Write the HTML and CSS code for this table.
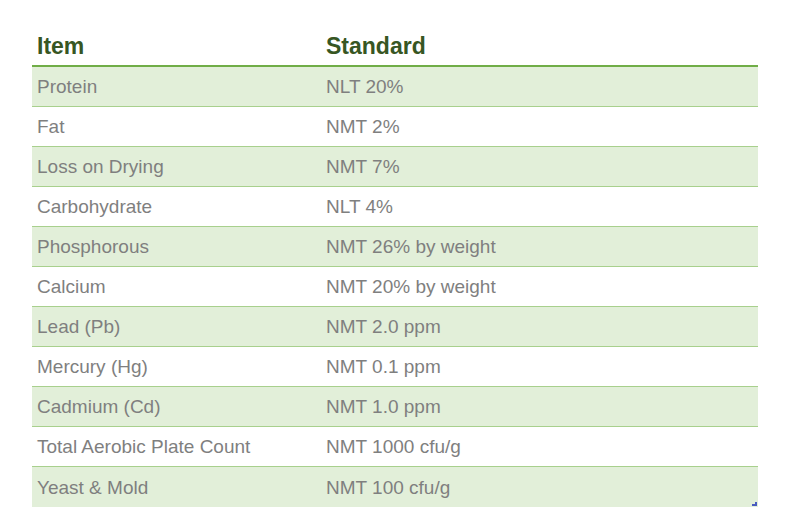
FILE: index.html
```html
<!DOCTYPE html>
<html>
<head>
<meta charset="utf-8">
<link rel="stylesheet" href="styles.css">
</head>
<body>
<div class="wrap">
<table class="spec">
  <thead>
    <tr><th class="c1">Item</th><th>Standard</th></tr>
  </thead>
  <tbody>
    <tr class="alt"><td>Protein</td><td>NLT 20%</td></tr>
    <tr><td>Fat</td><td>NMT 2%</td></tr>
    <tr class="alt"><td>Loss on Drying</td><td>NMT 7%</td></tr>
    <tr><td>Carbohydrate</td><td>NLT 4%</td></tr>
    <tr class="alt"><td>Phosphorous</td><td>NMT 26% by weight</td></tr>
    <tr><td>Calcium</td><td>NMT 20% by weight</td></tr>
    <tr class="alt"><td>Lead (Pb)</td><td>NMT 2.0 ppm</td></tr>
    <tr><td>Mercury (Hg)</td><td>NMT 0.1 ppm</td></tr>
    <tr class="alt"><td>Cadmium (Cd)</td><td>NMT 1.0 ppm</td></tr>
    <tr><td>Total Aerobic Plate Count</td><td>NMT 1000 cfu/g</td></tr>
    <tr class="alt last"><td>Yeast &amp; Mold</td><td class="endcell">NMT 100 cfu/g<span class="handle"></span></td></tr>
  </tbody>
</table>
</div>
</body>
</html>
```
FILE: styles.css
```css
html, body {
  margin: 0;
  padding: 0;
  background: #ffffff;
}
body {
  font-family: "Liberation Sans", Arial, sans-serif;
}
.wrap {
  padding: 32px 44px 0 32px;
}
.spec {
  width: 726px;
  border-collapse: collapse;
  table-layout: fixed;
}
.spec th {
  text-align: left;
  font-size: 23px;
  font-weight: bold;
  color: #375623;
  height: 33px;
  padding: 0 0 0 5px;
  vertical-align: top;
  line-height: 28px;
  border-bottom: 2px solid #70ad47;
}
.spec th.c1 {
  width: 284px;
}
.spec td {
  font-size: 19px;
  color: #7f7f7f;
  height: 38px;
  padding: 1px 0 0 5px;
  line-height: 38px;
  border-bottom: 1px solid #a8d08d;
}
.spec tr.alt td {
  background: #e2efd9;
}
.spec tr.last td {
  border-bottom: none;
  height: 39px;
}
.endcell {
  position: relative;
}
.handle {
  position: absolute;
  right: 1px;
  bottom: 1px;
  width: 5px;
  height: 4px;
  background: linear-gradient(to right, transparent 3px, #4a5cc0 3px) top / 5px 2px no-repeat,
              linear-gradient(#4a5cc0, #4a5cc0) bottom / 5px 2px no-repeat;
}
```
